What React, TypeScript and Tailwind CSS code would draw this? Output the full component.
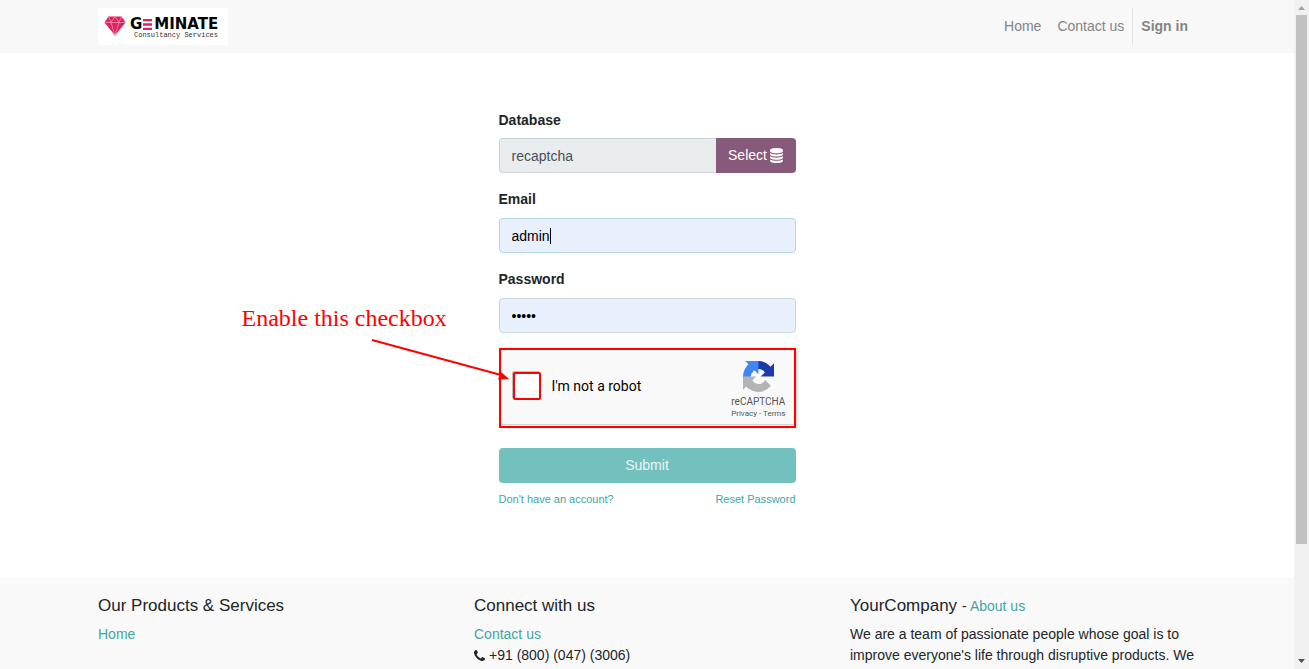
import React from "react";

function GeminateLogo() {
  return (
    <a href="#" aria-label="Geminate Consultancy Services" className="flex h-[37px] w-[130px] items-center gap-1 bg-white pl-1.5 text-black">
      <svg viewBox="0 0 22 20" className="mb-0.5 h-5 w-[22px] shrink-0" aria-hidden="true">
        <path d="M4.500 0.500H17.500L21.500 6.500L11 19.500L0.500 6.500Z" fill="#e0205f" />
        <path d="M0.500 6.500H21.500M4.500 0.500L7 6.500L11 0.500L15 6.500L17.500 0.500M7 6.500L11 19.500L15 6.500" fill="none" stroke="#f7a8c2" strokeWidth="0.7" />
      </svg>
      <span className="flex flex-col gap-px pt-1">
        <span className="flex items-center font-['DejaVu_Sans',sans-serif] text-[15px] leading-[13px] font-bold">
          G
          <svg viewBox="0 0 9 11" className="mr-0.5 ml-px h-[11px] w-[9px]" aria-hidden="true">
            <path d="M0 0h9v2.300H0zM0 4.350h9v2.300H0zM0 8.700h9V11H0z" fill="#e0205f" />
          </svg>
          MINATE
        </span>
        <span className="pl-1 font-['Liberation_Mono',monospace] text-[7px] leading-[7px] whitespace-nowrap text-[#333]">
          Consultancy Services
        </span>
      </span>
    </a>
  );
}

function DatabaseIcon() {
  return (
    <svg viewBox="0 0 1536 1792" className="h-[15px] w-[13px]" fill="currentColor" aria-hidden="true">
      <path d="M768 768q237 0 443-43t325-127v170q0 69-103 128t-280 93.5-385 34.5-385-34.5-280-93.5-103-128v-170q119 84 325 127t443 43zm0 768q237 0 443-43t325-127v170q0 69-103 128t-280 93.5-385 34.5-385-34.5-280-93.5-103-128v-170q119 84 325 127t443 43zm0-384q237 0 443-43t325-127v170q0 69-103 128t-280 93.5-385 34.5-385-34.5-280-93.5-103-128v-170q119 84 325 127t443 43zm0-1152q208 0 385 34.5t280 93.5 103 128v128q0 69-103 128t-280 93.5-385 34.5-385-34.5-280-93.5-103-128v-128q0-69 103-128t280-93.5 385-34.5z" />
    </svg>
  );
}

function PhoneIcon() {
  return (
    <svg viewBox="0 128 1408 1408" className="h-[11px] w-[11px]" fill="currentColor" aria-hidden="true">
      <path d="M1408 1240q0 27-10 70.5t-21 68.5q-21 50-122 106-94 51-186 51-27 0-53-3.5t-57.5-12.5-47-14.5-55.5-20.5-49-18q-98-35-175-83-127-79-264-216t-216-264q-48-77-83-175-3-9-18-49t-20.5-55.5-14.5-47-12.5-57.5-3.5-53q0-92 51-186 56-101 106-122 25-11 68.5-21t70.5-10q14 0 21 3 18 6 53 76 11 19 30 54t35 63.5 31 53.5q3 4 17.5 25t21.5 35.5 7 28.5q0 20-28.5 50t-62 55-62 53-28.5 46q0 9 5 22.5t8.5 20.5 14 24 11.5 19q76 137 174 235t235 174q2 1 19 11.5t24 14 20.5 8.5 22.5 5q18 0 46-28.5t53-62 55-62 50-28.5q14 0 28.5 7t35.5 21.5 25 17.5q25 15 53.5 31t63.5 35 54 30q70 35 76 53 3 7 3 21z" />
    </svg>
  );
}

function RecaptchaIcon() {
  return (
    <svg viewBox="0 0 64 64" className="size-[31px]" aria-hidden="true">
      <path fill="#1c3aa9" d="M64 31.955l-.033-1.37V4.687l-7.16 7.16C50.948 4.674 42.033.093 32.05.093c-10.4 0-19.622 4.96-25.458 12.64l11.736 11.86a15.55 15.55 0 0 1 4.754-5.334c2.05-1.6 4.952-2.906 8.968-2.906.485 0 .86.057 1.135.163 4.976.393 9.288 3.14 11.828 7.124l-8.307 8.307L64 31.953" />
      <path fill="#4285f4" d="M31.862.094l-1.37.033H4.594l7.16 7.16C4.58 13.147 0 22.06 0 32.046c0 10.4 4.96 19.622 12.64 25.458L24.5 45.768a15.55 15.55 0 0 1-5.334-4.754c-1.6-2.05-2.906-4.952-2.906-8.968 0-.485.057-.86.163-1.135.393-4.976 3.14-9.288 7.124-11.828l8.307 8.307L31.86.095" />
      <path fill="#b4b4b4" d="M.001 32.045l.033 1.37v25.898l7.16-7.16c5.86 7.173 14.774 11.754 24.76 11.754 10.4 0 19.622-4.96 25.458-12.64l-11.736-11.86a15.55 15.55 0 0 1-4.754 5.334c-2.05 1.6-4.952 2.906-8.968 2.906-.485 0-.86-.057-1.135-.163-4.976-.393-9.288-3.14-11.828-7.124l8.307-8.307c-10.522.04-22.4.066-27.295-.005" />
    </svg>
  );
}

function Header() {
  return (
    <header className="bg-[#f8f8f8]">
      <div className="mx-auto flex h-[53px] max-w-[1128px] items-center justify-between px-[15px]">
        <GeminateLogo />
        <nav className="flex items-center text-[#848484]">
          <a href="#" className="px-2">Home</a>
          <a href="#" className="px-2">Contact us</a>
          <a href="#" className="border-l border-[#e6e6e6] px-2 py-2 font-bold">Sign in</a>
        </nav>
      </div>
    </header>
  );
}

function Callout() {
  return (
    <div className="pointer-events-none absolute top-[-46px] right-[285px] w-[268px]">
      <p className="pl-px font-['Liberation_Serif',serif] text-2xl leading-7 whitespace-nowrap text-[#f00]">
        Enable this checkbox
      </p>
      <svg viewBox="0 0 268 50" className="h-[50px] w-[268px]" aria-hidden="true">
        <path d="M131 8L260 43" stroke="#f00" strokeWidth="2" />
        <path d="M268 47L257 47.500L259.500 39.500Z" fill="#f00" />
      </svg>
    </div>
  );
}

function Recaptcha() {
  return (
    <div className="relative mb-5 flex h-20 items-start justify-between border-2 border-[#f00] bg-[#f9f9f9] pr-2 pl-3 shadow-[2px_0_2px_#ddd]">
      <div className="flex items-center pt-[22px]">
        <input
          id="robot"
          type="checkbox"
          className="mr-[11px] size-7 appearance-none rounded-[2px] border-2 border-[#f00] bg-white shadow-[-1px_-1px_0_#bbb]"
        />
        <label htmlFor="robot" className="font-['Roboto',sans-serif] text-black">I'm not a robot</label>
      </div>
      <div className="flex flex-col items-center pt-[11px] font-['Roboto',sans-serif] text-[#555]">
        <RecaptchaIcon />
        <span className="mt-1 text-[10px] leading-3">reCAPTCHA</span>
        <span className="text-[8px] leading-3">
          <a href="#">Privacy</a> - <a href="#">Terms</a>
        </span>
      </div>
      <div className="absolute inset-x-0 bottom-px h-px bg-[#d3d3d3]" />
      <Callout />
    </div>
  );
}

function LoginForm() {
  return (
    <form className="mx-auto w-[297px]" onSubmit={(event) => event.preventDefault()}>
      <label htmlFor="database" className="mb-[7px] block font-bold">Database</label>
      <div className="mb-4 flex h-[35px]">
        <input
          id="database"
          readOnly
          defaultValue="recaptcha"
          className="min-w-0 flex-1 rounded-l border border-r-0 border-[#ced4da] bg-[#e9ecef] px-3 pt-0.5 text-[#495057]"
        />
        <button type="button" className="flex w-20 items-center justify-center gap-[3px] rounded-r bg-[#875a7b] text-white">
          Select
          <DatabaseIcon />
        </button>
      </div>
      <label htmlFor="email" className="mb-2 block font-bold">Email</label>
      <div className="relative mb-4 h-[35px]">
        <input
          id="email"
          defaultValue="admin"
          className="size-full rounded border border-[#b5d9de] bg-[#e8f0fe] px-3 text-black outline-none"
        />
        <span className="absolute top-[10px] left-[51px] h-4 w-px bg-black" />
      </div>
      <label htmlFor="password" className="mb-2 block font-bold">Password</label>
      <input
        id="password"
        type="password"
        defaultValue="admin"
        className="mb-[15px] block h-[35px] w-full rounded border border-[#ced4da] bg-[#e8f0fe] px-3 text-black"
      />
      <Recaptcha />
      <button type="submit" className="block h-[35px] w-full rounded bg-[#73c1be] text-[#e9f6f5]">
        Submit
      </button>
      <div className="mt-2 flex justify-between text-[11px] leading-4 text-[#43a5a3]">
        <a href="#">Don't have an account?</a>
        <a href="#">Reset Password</a>
      </div>
    </form>
  );
}

function Footer() {
  return (
    <footer className="bg-[#f9f9f9]">
      <div className="mx-auto grid max-w-[1128px] grid-cols-3 gap-[30px] px-[15px] pt-[17px] pb-8">
        <section>
          <h2 className="mb-[7px] text-[17px] leading-[22px]">Our Products &amp; Services</h2>
          <a href="#" className="text-[#43a5a3]">Home</a>
        </section>
        <section>
          <h2 className="mb-[7px] text-[17px] leading-[22px]">Connect with us</h2>
          <a href="#" className="text-[#43a5a3]">Contact us</a>
          <p className="flex items-center gap-1">
            <PhoneIcon />
            +91 (800) (047) (3006)
          </p>
        </section>
        <section>
          <div className="mb-[7px] flex h-[22px] items-baseline gap-[5px] leading-[22px]">
            <h2 className="text-[17px] leading-[22px]">YourCompany</h2>
            <span>
              - <a href="#" className="text-[#43a5a3]">About us</a>
            </span>
          </div>
          <p>
            We are a team of passionate people whose goal is to improve everyone's life through disruptive products. We
          </p>
        </section>
      </div>
    </footer>
  );
}

function Scrollbar() {
  return (
    <div className="flex w-[15px] shrink-0 flex-col items-center justify-between bg-[#f1f1f1]" aria-hidden="true">
      <svg viewBox="0 0 15 15" className="size-[15px] shrink-0">
        <path d="M4 10L7.500 6L11 10Z" fill="#a3a3a3" />
      </svg>
      <div className="h-[79%] w-[11px] bg-[#c1c1c1]" />
      <div className="flex-1" />
      <svg viewBox="0 0 15 15" className="size-[15px] shrink-0">
        <path d="M4 5L7.500 9L11 5Z" fill="#505050" />
      </svg>
    </div>
  );
}

export default function App() {
  return (
    <div className="flex h-screen overflow-hidden bg-white font-['Liberation_Sans',Arial,sans-serif] text-sm leading-[21px] text-[#212529]">
      <div className="min-w-0 flex-1 overflow-hidden">
        <Header />
        <main className="pt-[57px] pb-[71px]">
          <LoginForm />
        </main>
        <Footer />
      </div>
      <Scrollbar />
    </div>
  );
}
